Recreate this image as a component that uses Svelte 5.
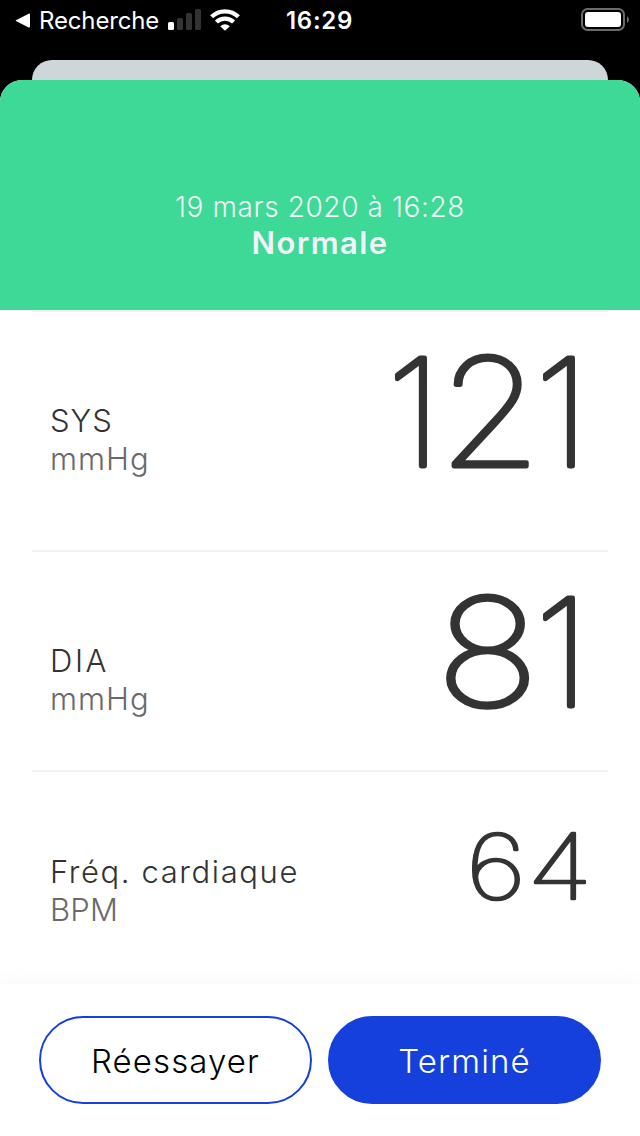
<script>
	const date = "19 mars 2020 à 16:28";
	const status = "Normale";

	// x is the centre of each digit, stretch its horizontal scale
	const readings = [
		{
			id: "sys",
			label: "SYS",
			unit: "mmHg",
			digits: [
				{ char: "1", x: 24, stretch: 1 },
				{ char: "2", x: 100, stretch: 1.1 },
				{ char: "1", x: 172, stretch: 1 },
			],
		},
		{
			id: "dia",
			label: "DIA",
			unit: "mmHg",
			digits: [
				{ char: "8", x: 97.5, stretch: 1.15 },
				{ char: "1", x: 172, stretch: 1 },
			],
		},
		{
			id: "pulse",
			label: "Fréq. cardiaque",
			unit: "BPM",
			digits: [
				{ char: "6", x: 106, stretch: 1.19 },
				{ char: "4", x: 170, stretch: 1.22 },
			],
		},
	];
</script>

<div class="screen">
	<div class="status-bar">
		<svg class="back" width="16" height="16" viewBox="0 0 16 16">
			<path d="M1 7.2 13.6 .8Q15 .2 15 1.6V13.6Q15 15 13.6 14.4L1 8Q.2 7.6 1 7.2Z" fill="#fff" />
		</svg>
		<span class="back-label">Recherche</span>
		<svg class="signal" width="34" height="22" viewBox="0 0 34 22">
			<rect x="0" y="13" width="6" height="8" rx="1.5" fill="#fff" />
			<rect x="9" y="9" width="6" height="12" rx="1.5" fill="#333" />
			<rect x="18" y="4" width="6" height="17" rx="1.5" fill="#333" />
			<rect x="27" y="0" width="6" height="21" rx="1.5" fill="#333" />
		</svg>
		<svg class="wifi" width="30" height="22" viewBox="0 0 30 22">
			<g fill="none" stroke="#fff" stroke-width="4.3">
				<path d="M1.6 7.8A19.2 19.2 0 0 1 28.4 7.8" />
				<path d="M6.4 13A12.4 12.4 0 0 1 23.6 13" />
			</g>
			<path d="M15 21.8 10.2 17.2Q15 13.2 19.8 17.2Z" fill="#fff" />
		</svg>
		<span class="time">16:29</span>
		<svg class="battery" width="48" height="24" viewBox="0 0 48 24">
			<rect x="1" y="1" width="42" height="21" rx="5.5" fill="none" stroke="#6b6b6b" stroke-width="2" />
			<rect x="4" y="4" width="36" height="15" rx="3" fill="#fff" />
			<path d="M46 8Q48 9.5 48 11.5T46 15Z" fill="#6b6b6b" />
		</svg>
	</div>

	<div class="previous-card"></div>

	<main class="sheet">
		<header>
			<p class="date">{date}</p>
			<h1>{status}</h1>
		</header>

		<section class="readings">
			{#each readings as reading (reading.id)}
				<div class="reading {reading.id}">
					<div class="name">
						<div class="label">{reading.label}</div>
						<div class="unit">{reading.unit}</div>
					</div>
					<svg class="value" width="238" height="200" viewBox="-20 0 238 200">
						{#each reading.digits as digit}
							<text transform="translate({digit.x} 153.5) scale({digit.stretch} 1)">{digit.char}</text>
						{/each}
					</svg>
				</div>
			{/each}
		</section>

		<footer>
			<button class="retry">Réessayer</button>
			<button class="done">Terminé</button>
		</footer>
	</main>
</div>

<style>
	:global(body) {
		margin: 0;
		background: #000;
	}

	.screen {
		width: 640px;
		height: 1136px;
		display: flex;
		flex-direction: column;
		overflow: hidden;
		background: #000;
		font-family: Inter, "Liberation Sans", sans-serif;
	}

	.status-bar {
		display: flex;
		align-items: flex-start;
		flex: 0 0 60px;
		box-sizing: border-box;
		padding: 8px 11px 0 15px;
		color: #fff;
	}

	.back {
		margin-top: 5px;
	}

	.back-label {
		width: 129px;
		margin-left: 8px;
		font-size: 24px;
		line-height: 26px;
		letter-spacing: -0.15px;
	}

	.signal {
		margin-top: 1px;
	}

	.wifi {
		margin: 1px 0 0 8px;
	}

	.time {
		margin-left: 46px;
		font-size: 24px;
		font-weight: 600;
		line-height: 26px;
		letter-spacing: 0.7px;
	}

	.battery {
		margin-left: auto;
	}

	.previous-card {
		flex: 0 0 20px;
		margin: 0 32px;
		border-radius: 20px 20px 0 0;
		background: #ced6da;
	}

	.sheet {
		display: flex;
		flex: 1;
		flex-direction: column;
		overflow: hidden;
		border-radius: 22px 22px 0 0;
		background: #fff;
	}

	header {
		flex: 0 0 230px;
		box-sizing: border-box;
		padding-top: 108px;
		background: #3ed897;
		color: #f1f3f8;
		text-align: center;
	}

	.date {
		margin: 0;
		font-size: 28px;
		font-weight: 300;
		line-height: 38px;
		letter-spacing: 0.6px;
	}

	h1 {
		margin: 0;
		font-size: 31px;
		font-weight: 600;
		line-height: 34px;
		letter-spacing: 1.4px;
	}

	.readings {
		flex: 1;
		padding: 0 32px;
	}

	.reading {
		display: flex;
		box-sizing: border-box;
		height: 220px;
		padding-left: 18px;
		border-top: 2px solid #edf2f6;
		justify-content: space-between;
	}

	.reading.sys {
		height: 240px;
	}

	.reading.pulse {
		height: 214px;
	}

	.name {
		padding-top: 90px;
		font-size: 31px;
		line-height: 38px;
	}

	.pulse .name {
		padding-top: 81px;
	}

	.label {
		color: #333;
		font-weight: 350;
		letter-spacing: 1px;
	}

	.dia .label {
		letter-spacing: 2.6px;
	}

	.pulse .label {
		letter-spacing: 1.6px;
	}

	.unit {
		color: #6a6a6a;
		font-weight: 350;
		letter-spacing: 1px;
	}

	.pulse .unit {
		letter-spacing: 0.2px;
	}

	.value {
		fill: #333;
		stroke: #333;
		stroke-width: 4.8px;
		stroke-linejoin: round;
		font-size: 149px;
		font-weight: 100;
		text-anchor: middle;
	}

	.pulse .value {
		margin-top: -27px;
		stroke-width: 2.6px;
		font-size: 90px;
	}

	footer {
		display: flex;
		flex: 0 0 152px;
		gap: 16px;
		box-sizing: border-box;
		padding: 32px 39px;
		background: #fff;
		box-shadow: 0 0 24px rgba(0, 0, 0, 0.04);
	}

	button {
		flex: 1;
		box-sizing: border-box;
		height: 88px;
		padding: 2px 0 0;
		border: 2px solid #1540dc;
		border-radius: 44px;
		font-family: inherit;
		font-size: 33px;
		font-weight: 350;
		letter-spacing: 1.1px;
	}

	.retry {
		background: #fff;
		color: #000;
	}

	.done {
		background: #1540dc;
		color: #fff;
	}
</style>
